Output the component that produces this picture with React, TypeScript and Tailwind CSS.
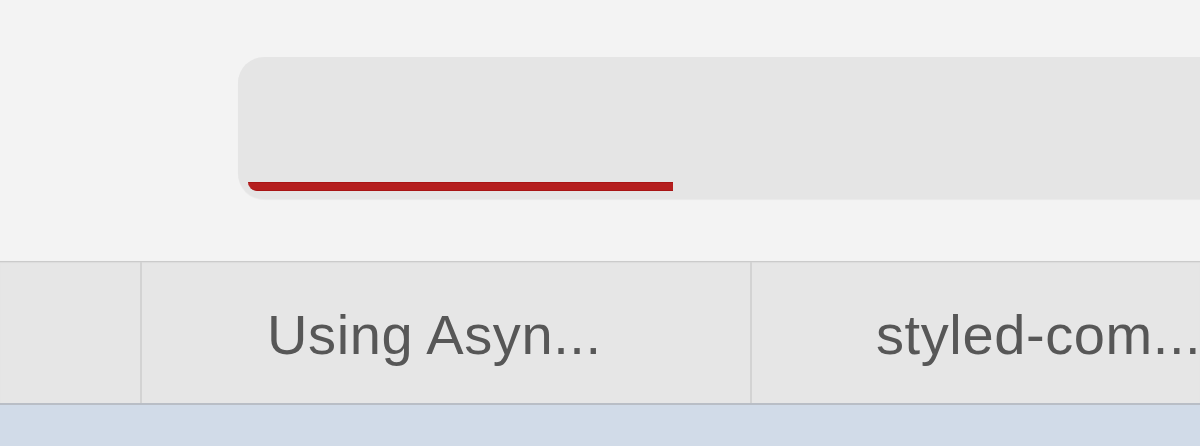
export default function App() {
  const font = { fontFamily: '"Liberation Sans", Arial, sans-serif' };
  return (
    <div className="w-[1200px] h-[446px] overflow-hidden flex flex-col bg-[#f3f3f3]" style={font}>
      {/* Toolbar with address bar */}
      <div className="h-[261px] shrink-0 bg-[#f3f3f3] pt-[57px] pl-[238px]">
        <div className="relative h-[142px] w-[1100px] rounded-[26px] bg-[#e5e5e5] shadow-[0_1px_1px_rgba(0,0,0,0.04)] overflow-hidden">
          <div className="absolute left-[10px] top-[125px] h-[9px] w-[425px] bg-[#b51f1f] border-y border-[#a81515] rounded-bl-[10px]" />
        </div>
      </div>
      {/* Tab bar */}
      <div className="h-[144px] shrink-0 flex border-t border-[#cbcbcb] border-b-2 border-b-[#b9bec6] bg-[#e6e6e6] shadow-[inset_0_1px_1px_rgba(0,0,0,0.04)]">
        <div className="w-[142px] shrink-0 border-r-[2px] border-[#d3d3d3]" />
        <div className="w-[610px] shrink-0 border-r-[2px] border-[#d3d3d3] flex items-center pl-[125px] pt-[4px]">
          <span className="text-[56px] leading-none text-[#575757] whitespace-nowrap tracking-[0.6px]">Using Asyn...</span>
        </div>
        <div className="w-[610px] shrink-0 flex items-center pl-[124px] pt-[4px]">
          <span className="text-[56px] leading-none text-[#575757] whitespace-nowrap tracking-[0.6px]">styled-com...</span>
        </div>
      </div>
      <div className="flex-1 bg-[#d1dbe8]" />
    </div>
  );
}
